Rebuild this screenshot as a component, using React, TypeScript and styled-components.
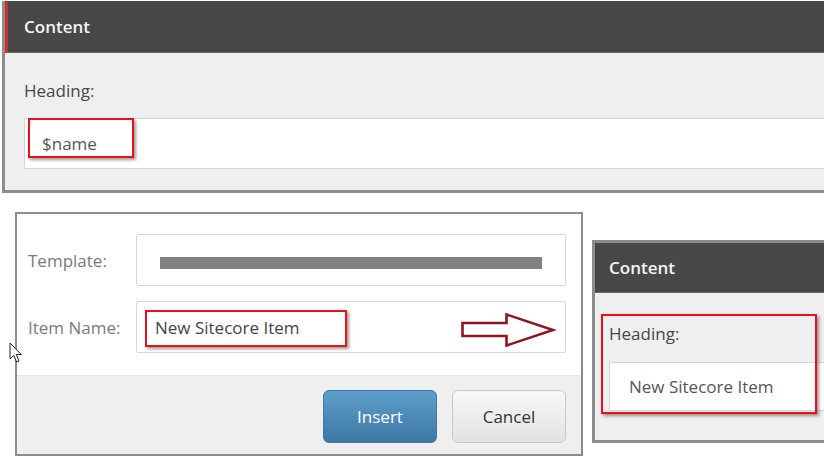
import React from "react";
import styled, { createGlobalStyle } from "styled-components";

const Global = createGlobalStyle`
  html, body { margin: 0; padding: 0; background: #ffffff; }
  body { font-family: "Open Sans", "Noto Sans", sans-serif; }
`;

const Page = styled.div`
  position: relative;
  width: 824px;
  height: 471px;
  overflow: hidden;
  background: #ffffff;
`;

const TopPanel = styled.section`
  position: relative;
  margin: 1px 0 0 2px;
  width: 840px;
  border-left: 3px solid #8c8c8c;
  border-bottom: 3px solid #8c8c8c;
  background: #efefef;
`;

const Header = styled.div<{ $accent?: boolean; $pad: number; $h: number }>`
  height: ${(p) => p.$h}px;
  display: flex;
  align-items: center;
  padding-left: ${(p) => p.$pad}px;
  background: #484848;
  border-left: ${(p) => (p.$accent ? "3px solid #c9332c" : "none")};
  border-bottom: 1px solid #6a6a6a;
  color: #f4f4f4;
  font-size: 17px;
  font-weight: 600;
`;

const PanelBody = styled.div<{ $pt: number; $pl: number; $pb: number; $gap: number }>`
  display: flex;
  flex-direction: column;
  gap: ${(p) => p.$gap}px;
  padding: ${(p) => p.$pt}px 0 ${(p) => p.$pb}px ${(p) => p.$pl}px;
`;

const FieldLabel = styled.div`
  font-size: 17px;
  line-height: 22px;
  color: #474747;
`;

const ContentInput = styled.div<{ $h: number; $pl: number }>`
  position: relative;
  height: ${(p) => p.$h}px;
  display: flex;
  align-items: center;
  padding-left: ${(p) => p.$pl}px;
  background: #ffffff;
  border: 1px solid #d6d6d6;
  border-right: none;
  box-sizing: border-box;
  font-size: 17px;
  color: #555555;
`;

const Annotation = styled.div<{ $l: number; $t: number; $w: number; $h: number }>`
  position: absolute;
  left: ${(p) => p.$l}px;
  top: ${(p) => p.$t}px;
  width: ${(p) => p.$w}px;
  height: ${(p) => p.$h}px;
  box-sizing: border-box;
  border: 2px solid #e8101a;
  box-shadow: 2px 2px 3px rgba(60, 20, 20, 0.45);
  pointer-events: none;
`;

const Row = styled.div`
  display: flex;
  align-items: flex-start;
  margin-top: 19px;
`;

const Dialog = styled.section`
  margin-left: 15px;
  width: 568px;
  box-sizing: border-box;
  border: 2px solid #8c8c8c;
  background: #ffffff;
`;

const DialogBody = styled.div`
  display: grid;
  grid-template-columns: 108px 430px;
  row-gap: 15px;
  padding: 20px 15px 22px 11px;
  align-items: center;
`;

const DialogLabel = styled.div`
  font-size: 17px;
  color: #7a7a7a;
`;

const DialogInput = styled.div`
  position: relative;
  height: 52px;
  box-sizing: border-box;
  border: 1px solid #d8d8d8;
  border-radius: 2px;
  display: flex;
  align-items: center;
  padding: 0 23px 0 18px;
  font-size: 17px;
  color: #444444;
  background: #ffffff;
`;

const TemplateBar = styled.div`
  flex: 1;
  margin-left: 5px;
  margin-top: 6px;
  height: 12px;
  background: #808080;
`;

const ArrowWrap = styled.svg`
  position: absolute;
  left: 324px;
  top: 11px;
`;

const Footer = styled.div`
  display: flex;
  justify-content: flex-end;
  gap: 15px;
  padding: 14px 15px 11px 0;
  background: #efefef;
  border-top: 1px solid #e6e6e6;
`;

const Button = styled.button<{ $primary?: boolean }>`
  width: 114px;
  height: 53px;
  border-radius: 6px;
  font-family: "Open Sans", "Noto Sans", sans-serif;
  font-size: 17px;
  cursor: pointer;
  border: 1px solid ${(p) => (p.$primary ? "#3f78a3" : "#c9c9c9")};
  color: ${(p) => (p.$primary ? "#ffffff" : "#333333")};
  background: ${(p) =>
    p.$primary
      ? "linear-gradient(#5c9ecb, #3f78a4)"
      : "linear-gradient(#f8f8f8, #e2e2e2)"};
`;

const SidePanel = styled.section`
  position: relative;
  margin-left: 9px;
  margin-top: 28px;
  width: 250px;
  flex-shrink: 0;
  border: 3px solid #8c8c8c;
  border-right: none;
  background: #efefef;
`;

const Cursor = styled.svg`
  position: absolute;
  left: 9px;
  top: 342px;
`;

export default function App() {
  return (
    <Page>
      <Global />
      <TopPanel>
        <Header $accent $pad={16} $h={51}>Content</Header>
        <PanelBody $pt={27} $pl={19} $pb={21} $gap={16}>
          <FieldLabel>Heading:</FieldLabel>
          <ContentInput $h={51} $pl={17}>
            $name
            <Annotation $l={3} $t={-1} $w={106} $h={40} />
          </ContentInput>
        </PanelBody>
      </TopPanel>

      <Row>
        <Dialog>
          <DialogBody>
            <DialogLabel>Template:</DialogLabel>
            <DialogInput>
              <TemplateBar />
            </DialogInput>
            <DialogLabel>Item Name:</DialogLabel>
            <DialogInput>
              New Sitecore Item
              <Annotation $l={8} $t={8} $w={202} $h={37} />
              <ArrowWrap width="96" height="34" viewBox="0 0 96 34">
                <polygon
                  points="1.5,10 45.5,10 45.5,1.5 92,17 45.5,32.5 45.5,23 1.5,23"
                  fill="#ffffff"
                  stroke="#8e1524"
                  strokeWidth="2.6"
                  strokeLinejoin="miter"
                />
              </ArrowWrap>
            </DialogInput>
          </DialogBody>
          <Footer>
            <Button $primary>Insert</Button>
            <Button>Cancel</Button>
          </Footer>
        </Dialog>

        <SidePanel>
          <Header $pad={14} $h={49}>Content</Header>
          <PanelBody $pt={30} $pl={14} $pb={29} $gap={17}>
            <FieldLabel>Heading:</FieldLabel>
            <ContentInput $h={49} $pl={19}>
              New Sitecore Item
            </ContentInput>
          </PanelBody>
          <Annotation $l={6} $t={71} $w={216} $h={100} />
        </SidePanel>
      </Row>

      <Cursor width="14" height="22" viewBox="0 0 14 22">
        <path
          d="M1 1 L1 17 L4.8 13.4 L7.6 20 L10 19 L7.3 12.5 L12.3 12.5 Z"
          fill="#ffffff"
          stroke="#222222"
          strokeWidth="1"
          strokeLinejoin="miter"
        />
      </Cursor>
    </Page>
  );
}
